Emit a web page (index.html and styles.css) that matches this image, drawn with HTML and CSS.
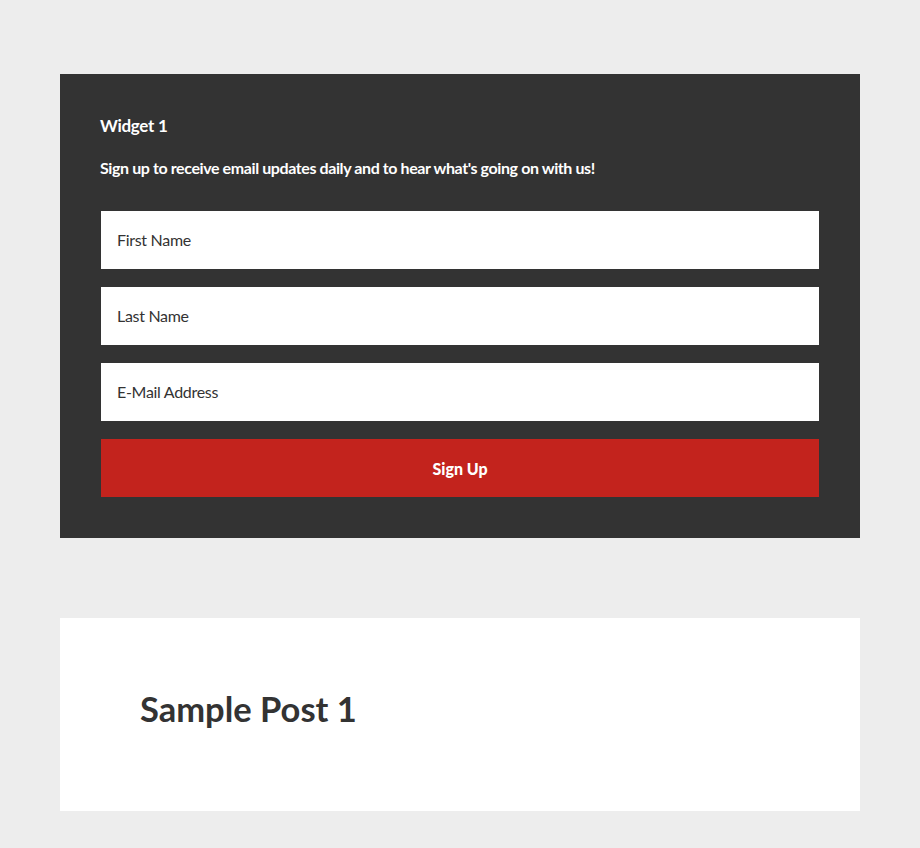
FILE: index.html
```html
<!DOCTYPE html>
<html lang="en">
<head>
<meta charset="utf-8">
<title>Widget</title>
<link rel="stylesheet" href="styles.css">
</head>
<body>
<div class="page">
  <section class="widget">
    <h3 class="widget-title">Widget 1</h3>
    <p class="widget-text">Sign up to receive email updates daily and to hear what's going on with us!</p>
    <form class="signup">
      <input class="field" type="text" placeholder="First Name">
      <input class="field" type="text" placeholder="Last Name">
      <input class="field" type="email" placeholder="E-Mail Address">
      <button class="submit" type="button">Sign Up</button>
    </form>
  </section>
  <article class="post">
    <h2 class="post-title">Sample Post 1</h2>
  </article>
</div>
</body>
</html>
```
FILE: styles.css
```css
html, body {
  margin: 0;
  padding: 0;
  background: #ededed;
}
body {
  font-family: Lato, "Open Sans", sans-serif;
  color: #333;
}
.page {
  width: 800px;
  margin: 0 auto;
  padding-top: 74px;
  display: flex;
  flex-direction: column;
  gap: 80px;
}
.widget {
  background: #333;
  padding: 40px;
  color: #fff;
}
.widget-title {
  margin: 0 0 17px;
  font-size: 17px;
  font-weight: 700;
  line-height: 24px;
  letter-spacing: -0.3px;
}
.widget-text {
  margin: 0 0 29px;
  font-size: 16px;
  font-weight: 700;
  line-height: 26px;
  letter-spacing: -0.4px;
}
.signup {
  display: flex;
  flex-direction: column;
  gap: 16px;
}
.field {
  display: block;
  box-sizing: border-box;
  width: 100%;
  height: 60px;
  margin: 0;
  border: 1px solid #333;
  background: #fff;
  padding: 0 16px 2px;
  font-family: Lato, "Open Sans", sans-serif;
  font-size: 16px;
  letter-spacing: -0.3px;
  color: #333;
  outline: none;
}
.field::placeholder {
  color: #333;
  opacity: 1;
}
.submit {
  display: block;
  box-sizing: border-box;
  width: 100%;
  height: 60px;
  margin: 0;
  border: 1px solid #333;
  background: #c3231d;
  color: #fff;
  font-family: Lato, "Open Sans", sans-serif;
  font-size: 16px;
  font-weight: 900;
  cursor: pointer;
}
.post {
  background: #fff;
  padding: 60px 80px;
  height: 193px;
  box-sizing: border-box;
}
.post-title {
  margin: 0;
  font-size: 34.5px;
  font-weight: 700;
  line-height: 62px;
  color: #333;
}
```
